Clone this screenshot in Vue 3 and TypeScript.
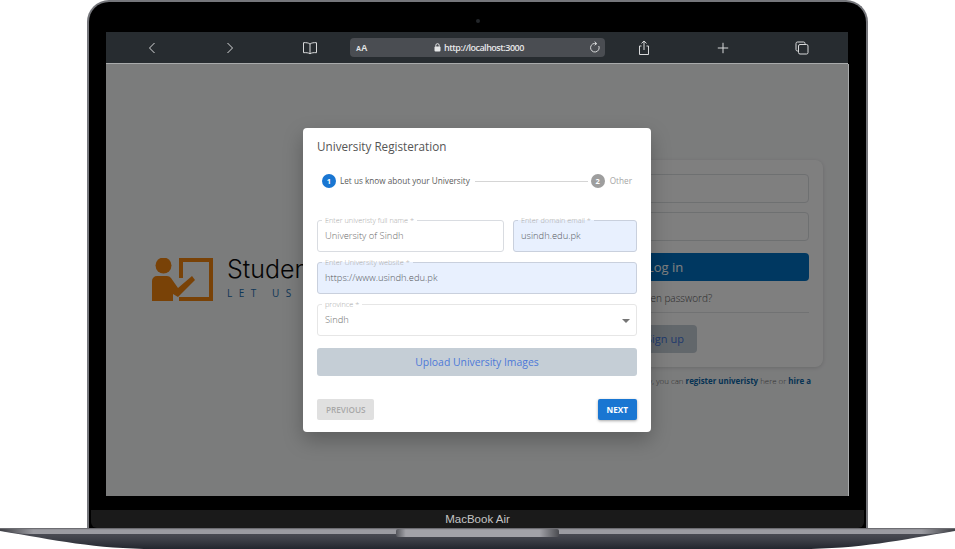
<script setup lang="ts">
interface Field {
  label: string
  value: string
  autofilled: boolean
  wide: boolean
}
const fields: Field[] = [
  { label: 'Enter univeristy full name *', value: 'University of Sindh', autofilled: false, wide: false },
  { label: 'Enter domain email *', value: 'usindh.edu.pk', autofilled: true, wide: false },
  { label: 'Enter University website *', value: 'https://www.usindh.edu.pk', autofilled: true, wide: true },
]
</script>

<template>
  <div class="stage">
    <div class="lid">
      <div class="camera"></div>
      <div class="toolbar">
        <svg class="ico back" width="10" height="14" viewBox="0 0 10 14"><path d="M7.5 2 2.5 7l5 5" /></svg>
        <svg class="ico forward" width="10" height="14" viewBox="0 0 10 14"><path d="M2.5 2l5 5-5 5" /></svg>
        <svg class="ico book" width="16" height="14" viewBox="0 0 16 14"><path d="M8 3C6.5 1.800 4 1.500 1.500 1.700v10C4 11.500 6.500 11.700 8 12.800c1.500-1.100 4-1.300 6.500-1.100v-10C12 1.500 9.500 1.800 8 3zM8 3v9.800" /></svg>
        <div class="urlbar">
          <span class="aa"><small>A</small>A</span>
          <span class="url">
            <svg width="7" height="9" viewBox="0 0 7 9"><rect x="0.500" y="3.500" width="6" height="5" rx="1" fill="#e6e7e8" /><path d="M1.800 3.800V2.400a1.700 1.700 0 0 1 3.400 0v1.400" fill="none" stroke="#e6e7e8" /></svg>
            http://localhost:3000
          </span>
          <svg class="ico reload" width="12" height="13" viewBox="0 0 12 13"><path d="M9.800 5a4.300 4.300 0 1 1-2.400-2.300M5.800 0.600l1.900 2.100-2.100 1.500" /></svg>
        </div>
        <svg class="ico share" width="14" height="16" viewBox="0 0 14 16"><path d="M4.500 6H2.500v8.500h9V6h-2M7 10V1.200M4.500 3.400 7 1l2.500 2.400" /></svg>
        <svg class="ico plus" width="12" height="12" viewBox="0 0 12 12"><path d="M6 .8v10.400M.8 6h10.400" /></svg>
        <svg class="ico tabs" width="14" height="14" viewBox="0 0 14 14"><path d="M3 10H2.500A1.500 1.500 0 0 1 1 8.500v-6A1.500 1.500 0 0 1 2.500 1h6A1.500 1.500 0 0 1 10 2.500V3" /><rect x="3.500" y="3.500" width="9.500" height="9.500" rx="1.500" /></svg>
      </div>

      <div class="screen">
        <div class="page">
          <div class="brand">
            <svg class="brand-mark" width="62" height="44" viewBox="0 0 62 44">
              <path d="M29 20V2H59V41H27" fill="none" stroke="#f2850f" stroke-width="4" />
              <circle cx="11.500" cy="7.500" r="8" fill="#f2850f" />
              <path d="M0 23a5 5 0 0 1 5-5h10a5 5 0 0 1 4 2l7 10 14-12 3 4-17 17-5-3v7H0z" fill="#f2850f" />
            </svg>
            <div class="brand-text">
              <div class="brand-name">Student Portal</div>
              <div class="brand-tag">LET US GUIDE YOU</div>
            </div>
          </div>

          <div class="login">
            <div class="card">
              <div class="ghost-input"></div>
              <div class="ghost-input"></div>
              <div class="login-btn">Log in</div>
              <div class="forgot">Forgotten password?</div>
              <div class="rule"></div>
              <div class="signup">Sign up</div>
            </div>
            <p class="card-note">If you are a university, you can <b>register univeristy</b> here or <b>hire a</b></p>
          </div>
        </div>

        <div class="backdrop"></div>

        <div class="dialog">
          <h2 class="title">University Registeration</h2>

          <div class="stepper">
            <span class="dot active">1</span>
            <span class="step-label">Let us know about your University</span>
            <span class="connector"></span>
            <span class="dot">2</span>
            <span class="step-label muted">Other</span>
          </div>

          <div class="form">
            <div v-for="f in fields" :key="f.label" class="field" :class="{ filled: f.autofilled, wide: f.wide }">
              <span class="float">{{ f.label }}</span>
              <span class="val">{{ f.value }}</span>
            </div>
            <div class="field wide select">
              <span class="float">province *</span>
              <span class="val">Sindh</span>
              <svg class="caret" width="8" height="4" viewBox="0 0 8 4"><path d="M0 0h8L4 4z" fill="#757575" /></svg>
            </div>
            <div class="upload">Upload University Images</div>
          </div>

          <div class="actions">
            <span class="btn disabled">PREVIOUS</span>
            <span class="btn primary">NEXT</span>
          </div>
        </div>
      </div>

      <div class="gap"></div>
      <div class="chin">MacBook Air</div>
    </div>

    <svg class="base" width="955" height="21" viewBox="0 0 955 21" preserveAspectRatio="none">
      <defs>
        <linearGradient id="body" x1="0" y1="0" x2="0" y2="1">
          <stop offset="0" stop-color="#55565e" />
          <stop offset="0.500" stop-color="#3f4149" />
          <stop offset="1" stop-color="#23262e" />
        </linearGradient>
        <linearGradient id="lip" x1="0" y1="0" x2="1" y2="0">
          <stop offset="0" stop-color="#3a3b40" />
          <stop offset="0.035" stop-color="#9c9ca2" />
          <stop offset="0.965" stop-color="#9c9ca2" />
          <stop offset="1" stop-color="#3a3b40" />
        </linearGradient>
        <linearGradient id="notch" x1="0" y1="0" x2="1" y2="0">
          <stop offset="0" stop-color="#55565c" />
          <stop offset="0.060" stop-color="#a2a2a8" />
          <stop offset="0.880" stop-color="#a2a2a8" />
          <stop offset="1" stop-color="#4a4b50" />
        </linearGradient>
      </defs>
      <path d="M0 1H955V3C900 12 860 21 800 21H155C95 21 55 12 0 3Z" fill="url(#body)" />
      <path d="M0 1H955V2.500C945 4 935 6 925 6H30C20 6 10 4 0 2.500Z" fill="url(#lip)" />
      <rect x="396" y="1" width="163" height="8" rx="2" fill="url(#notch)" />
      <rect x="0" y="0" width="955" height="1.200" fill="#6d6d72" />
    </svg>
  </div>
</template>

<style>
html, body { margin: 0; background: #fff; }
</style>

<style scoped>
.stage {
  width: 955px;
  height: 549px;
  overflow: hidden;
  background: #fff;
  font-family: "Open Sans", Lato, sans-serif;
  font-weight: 300;
}
.lid {
  position: relative;
  box-sizing: border-box;
  width: 781px;
  height: 528px;
  margin-left: 87px;
  padding: 32px 2px 0;
  background: #000;
  border-radius: 22px 22px 0 0;
  border: 2px solid #75767b;
  border-bottom: 0;
}
.camera {
  position: absolute;
  top: 17px;
  left: 387px;
  width: 4px;
  height: 4px;
  border-radius: 50%;
  background: #23262a;
}
.toolbar {
  display: flex;
  align-items: center;
  height: 31px;
  margin: -2px 16px 0 15px;
  background: #272c30;
  border-bottom: 1px solid #a9abac;
}
.ico { fill: none; stroke: #d8d9da; stroke-width: 1; flex: none; }
.back { margin-left: 41px; }
.forward { margin-left: 68px; }
.book { margin-left: 67px; }
.urlbar {
  display: flex;
  align-items: center;
  box-sizing: border-box;
  width: 255px;
  height: 19px;
  margin-left: 32px;
  padding: 0 4px 0 6px;
  background: #4a4d52;
  border-radius: 4px;
}
.aa { color: #e6e7e8; font: 700 9px "Liberation Sans", sans-serif; width: 78px; }
.aa small { font-size: 7px; }
.url {
  display: flex;
  align-items: center;
  gap: 3px;
  flex: 1;
  color: #e6e7e8;
  font: 600 9px "Open Sans", sans-serif;
  letter-spacing: -0.500px;
}
.share { margin-left: 32px; }
.plus { margin-left: 66px; }
.tabs { margin-left: 66px; }

.screen {
  position: relative;
  height: 432px;
  margin: 0 15px;
  overflow: hidden;
  background: #f7f8f9;
}
.page {
  display: flex;
  justify-content: space-between;
  height: 100%;
}
.brand {
  display: flex;
  align-items: flex-start;
  gap: 13px;
  margin: 194px 0 0 46px;
  white-space: nowrap;
}
.brand-name { font: 300 25px/30px Inter, Lato, sans-serif; color: #0a0a0a; margin-top: -4px; }
.brand-tag { margin-top: 3px; font-size: 10px; font-weight: 400; line-height: 12px; color: #1d6fb0; letter-spacing: 6.500px; }
.login { width: 316px; margin: 96px 26px 0 0; }
.card {
  display: flex;
  flex-direction: column;
  align-items: center;
  box-sizing: border-box;
  height: 207px;
  padding: 14px;
  background: #fff;
  border-radius: 8px;
  box-shadow: 0 1px 4px rgba(0, 0, 0, .15);
}
.ghost-input {
  width: 100%;
  height: 29px;
  margin-bottom: 9px;
  box-sizing: border-box;
  border: 1px solid #dde0e3;
  border-radius: 4px;
}
.login-btn {
  width: 100%;
  height: 28px;
  margin-top: 3px;
  background: #0071c2;
  color: #fff;
  border-radius: 4px;
  text-align: center;
  font-size: 13px;
  font-weight: 400;
  line-height: 28px;
}
.forgot { margin-top: 9px; font-size: 10px; line-height: 16px; color: #555; }
.rule { width: 100%; height: 1px; margin-top: 6px; background: #e2e4e6; }
.signup {
  width: 64px;
  height: 28px;
  margin-top: 12px;
  background: #c5ced6;
  color: #3f74d6;
  border-radius: 4px;
  text-align: center;
  font-size: 11px;
  font-weight: 400;
  line-height: 28px;
}
.card-note { margin: 8px 12px 0 0; text-align: right; white-space: nowrap; font-size: 7.900px; line-height: 12px; color: #666; }
.card-note b { color: #0a66a8; font-weight: 700; }

.backdrop {
  position: absolute;
  inset: 0;
  background: rgba(0, 0, 0, .5);
  border-right: 1px solid #a9abac;
}
.dialog {
  position: absolute;
  top: 64px;
  left: 197px;
  box-sizing: border-box;
  width: 348px;
  height: 304px;
  padding: 0 14px;
  background: #fff;
  border-radius: 4px;
  box-shadow: 0 8px 20px rgba(0, 0, 0, .25);
}
.title {
  margin: 11px 0 0;
  font-size: 11.700px;
  font-weight: 400;
  line-height: 14px;
  color: #555;
}
.stepper {
  display: flex;
  align-items: center;
  height: 14px;
  margin: 21px 5px 0;
}
.dot {
  flex: none;
  width: 14px;
  height: 14px;
  border-radius: 50%;
  background: #9e9e9e;
  color: #fff;
  text-align: center;
  font-size: 7.500px;
  font-weight: 700;
  line-height: 14px;
}
.dot.active { background: #1976d2; }
.step-label { margin-left: 4px; font-size: 8.200px; line-height: 12px; margin-top: -1px; font-weight: 400; color: #5c5c5c; white-space: nowrap; }
.step-label.muted { color: #a6a6a6; margin-left: 5px; }
.connector { flex: 1; height: 1px; margin: 0 3px 0 5px; background: #d5d5d5; }
.form {
  display: grid;
  grid-template-columns: 187px 124px;
  column-gap: 9px;
  row-gap: 10px;
  margin-top: 32px;
}
.field {
  position: relative;
  display: flex;
  align-items: center;
  box-sizing: border-box;
  height: 32px;
  padding: 0 7px;
  border: 1px solid #d9dce1;
  border-radius: 3px;
}
.field.wide { grid-column: 1 / -1; }
.field.filled { background: #e8f0fe; border-color: #c9d0dd; }
.float {
  position: absolute;
  top: -5px;
  left: 4px;
  padding: 0 3px;
  font-size: 7.300px;
  line-height: 8px;
  color: #a8a8a8;
  background: #fff;
  white-space: nowrap;
}
.field.filled .float { background: linear-gradient(#fff 50%, #e8f0fe 50%); }
.val { font-size: 9.400px; line-height: 12px; color: #6b6b6b; }
.field.filled .val { color: #55585c; }
.select { border-color: #e6e6e6; }
.caret { position: absolute; right: 6px; top: 14px; }
.upload {
  grid-column: 1 / -1;
  height: 28px;
  margin-top: 2px;
  background: #c5ced6;
  border-radius: 3px;
  color: #4d79d8;
  text-align: center;
  font-size: 10.400px;
  font-weight: 400;
  line-height: 28px;
}
.actions {
  display: flex;
  justify-content: space-between;
  margin-top: 23px;
}
.btn {
  display: block;
  height: 21px;
  padding: 0 9px;
  border-radius: 2px;
  font-size: 8.200px;
  font-weight: 700;
  line-height: 21px;
}
.btn.disabled { background: #e0e0e0; color: #a8a8a8; font-weight: 600; }
.btn.primary { background: #1976d2; color: #fff; box-shadow: 0 1px 3px rgba(0, 0, 0, .35); }

.gap { height: 14px; }
.chin {
  height: 18px;
  background: #1a1a1a;
  border-radius: 0 0 6px 6px;
  color: #c4c4c4;
  text-align: center;
  font: 11.500px/18px "Liberation Sans", sans-serif;
}
.base { display: block; }
</style>
